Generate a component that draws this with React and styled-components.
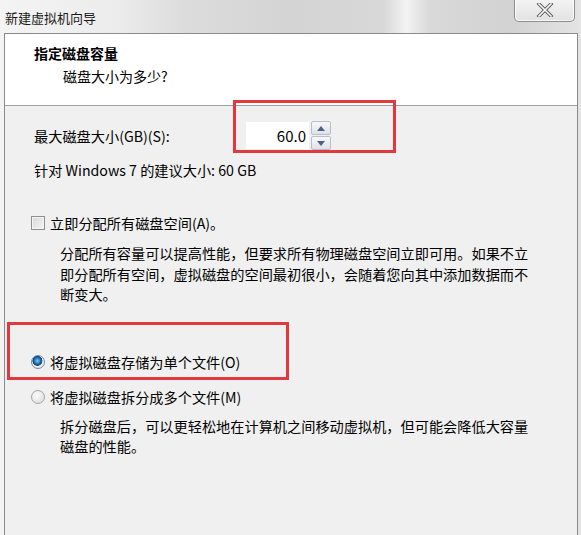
import styled, { createGlobalStyle } from "styled-components";

const Global = createGlobalStyle`
  html, body {
    margin: 0;
    padding: 0;
    background: #ececec;
  }
  body {
    font-family: "Noto Sans CJK SC", "Liberation Sans", sans-serif;
  }
`;

const Window = styled.div`
  position: relative;
  width: 581px;
  height: 535px;
  overflow: hidden;
  display: flex;
  flex-direction: column;
  background: linear-gradient(
    90deg,
    #f4f4f4 0%,
    #ececec 20%,
    #dcdcdc 32%,
    #d4d4d4 50%,
    #d8d8d8 66%,
    #f3f3f3 70%,
    #d9d9d9 74%,
    #d2d2d2 88%,
    #e4e4e4 100%
  );
`;

const TitleBar = styled.div`
  height: 33px;
  flex-shrink: 0;
  display: flex;
  align-items: center;
  justify-content: space-between;
  padding-left: 5px;
`;

const TitleText = styled.span`
  font-size: 13px;
  color: #1a1a1a;
  margin-top: 1px;
`;

const CloseButton = styled.div`
  align-self: flex-start;
  width: 59px;
  height: 22px;
  margin-right: 6px;
  margin-top: -1px;
  border: 1px solid #8d8d8d;
  border-top: none;
  border-radius: 0 0 5px 5px;
  background: linear-gradient(#f4f4f4, #e2e2e2);
  box-shadow: inset 0 0 0 1px rgba(255, 255, 255, 0.8);
  display: flex;
  align-items: center;
  justify-content: center;
`;

const Frame = styled.div`
  flex: 1;
  margin: 0 3px 0 4px;
  border: 1px solid #8b8b8b;
  border-bottom: none;
  display: flex;
  flex-direction: column;
  background: #f0f0f0;
`;

const Header = styled.div`
  height: 72px;
  background: #fff;
  border-bottom: 1px solid #a0a0a0;
  padding: 9px 0 0 29px;
  box-sizing: border-box;
`;

const HeaderTitle = styled.div`
  font-size: 14px;
  font-weight: 700;
  line-height: 20px;
  color: #000;
`;

const HeaderSub = styled.div`
  font-size: 14px;
  line-height: 20px;
  color: #000;
  margin: 3px 0 0 29px;
`;

const Body = styled.div`
  flex: 1;
  padding: 16px 20px 0 29px;
  display: flex;
  flex-direction: column;
  font-size: 14.2px;
  color: #000;
`;

const SizeRow = styled.div`
  display: flex;
  align-items: center;
  height: 27px;
`;

const Label = styled.span`
  width: 212px;
  line-height: 20px;
`;

const Spinner = styled.div`
  display: flex;
  align-items: center;
  height: 27px;
`;

const SpinInput = styled.div`
  width: 63px;
  height: 27px;
  background: #fff;
  box-sizing: border-box;
  padding-right: 3px;
  display: flex;
  align-items: center;
  justify-content: flex-end;
  font-size: 15px;
`;

const SpinButtons = styled.div`
  display: flex;
  flex-direction: column;
  margin-left: 2px;
  gap: 1px;
`;

const SpinBtn = styled.div`
  width: 18px;
  height: 12px;
  border: 1px solid #b9bfc8;
  border-radius: 2px;
  background: linear-gradient(#f7f8fa, #dde2ea);
  display: flex;
  align-items: center;
  justify-content: center;
`;

const Line = styled.div`
  line-height: 20px;
  margin-top: ${(p) => p.$top || 0}px;
`;

const OptionRow = styled.div`
  display: flex;
  align-items: center;
  gap: 5px;
  height: 20px;
  margin-top: ${(p) => p.$top || 0}px;
  margin-left: -3px;
`;

const CheckBox = styled.span`
  width: 12px;
  height: 12px;
  border: 1px solid #8e8f8f;
  background: linear-gradient(135deg, #d6d6d6, #f6f6f6);
  box-shadow: inset 0 0 0 1px #f4f4f4;
  flex-shrink: 0;
`;

const Radio = styled.span`
  width: 12px;
  height: 12px;
  border-radius: 50%;
  border: 1px solid ${(p) => (p.$on ? "#6b8bb0" : "#a4a4a4")};
  background: ${(p) =>
    p.$on
      ? "radial-gradient(circle at 45% 40%, #7ad0f5 0, #1f6fb1 32%, #0d3f77 48%, #f0f0f0 54%, #dcdcdc 100%)"
      : "radial-gradient(circle at 40% 35%, #fafafa 0, #e4e4e4 70%, #cfcfcf 100%)"};
  flex-shrink: 0;
`;

const Para = styled.p`
  margin: ${(p) => p.$top || 0}px 0 0 26px;
  line-height: 20.5px;
  max-width: 478px;
`;

const Highlight = styled.div`
  position: absolute;
  border: 3px solid #e2393f;
  box-sizing: border-box;
  pointer-events: none;
`;

export default function App() {
  return (
    <>
      <Global />
      <Window>
        <TitleBar>
          <TitleText>新建虚拟机向导</TitleText>
          <CloseButton>
            <svg width="18" height="14" viewBox="0 0 18 14">
              <path
                d="M3 1 L15 13 M15 1 L3 13"
                stroke="#555"
                strokeWidth="3.4"
                strokeLinecap="square"
              />
              <path
                d="M3 1 L15 13 M15 1 L3 13"
                stroke="#fdfdfd"
                strokeWidth="1.6"
                strokeLinecap="square"
              />
            </svg>
          </CloseButton>
        </TitleBar>
        <Frame>
          <Header>
            <HeaderTitle>指定磁盘容量</HeaderTitle>
            <HeaderSub>磁盘大小为多少?</HeaderSub>
          </Header>
          <Body>
            <SizeRow>
              <Label>最大磁盘大小(GB)(S):</Label>
              <Spinner>
                <SpinInput>60.0</SpinInput>
                <SpinButtons>
                  <SpinBtn>
                    <svg width="8" height="5" viewBox="0 0 8 5">
                      <path d="M0 5 L4 0 L8 5 Z" fill="#4d6185" />
                    </svg>
                  </SpinBtn>
                  <SpinBtn>
                    <svg width="8" height="5" viewBox="0 0 8 5">
                      <path d="M0 0 L4 5 L8 0 Z" fill="#4d6185" />
                    </svg>
                  </SpinBtn>
                </SpinButtons>
              </Spinner>
            </SizeRow>
            <Line $top={11}>针对 Windows 7 的建议大小: 60 GB</Line>
            <OptionRow $top={33}>
              <CheckBox />
              <span>立即分配所有磁盘空间(A)。</span>
            </OptionRow>
            <Para $top={10}>
              分配所有容量可以提高性能，但要求所有物理磁盘空间立即可用。如果不立即分配所有空间，虚拟磁盘的空间最初很小，会随着您向其中添加数据而不断变大。
            </Para>
            <OptionRow $top={47}>
              <Radio $on />
              <span>将虚拟磁盘存储为单个文件(O)</span>
            </OptionRow>
            <OptionRow $top={15}>
              <Radio />
              <span>将虚拟磁盘拆分成多个文件(M)</span>
            </OptionRow>
            <Para $top={9}>
              拆分磁盘后，可以更轻松地在计算机之间移动虚拟机，但可能会降低大容量磁盘的性能。
            </Para>
          </Body>
        </Frame>
        <Highlight style={{ left: 233, top: 100, width: 163, height: 53 }} />
        <Highlight style={{ left: 7, top: 322, width: 282, height: 58 }} />
      </Window>
    </>
  );
}
